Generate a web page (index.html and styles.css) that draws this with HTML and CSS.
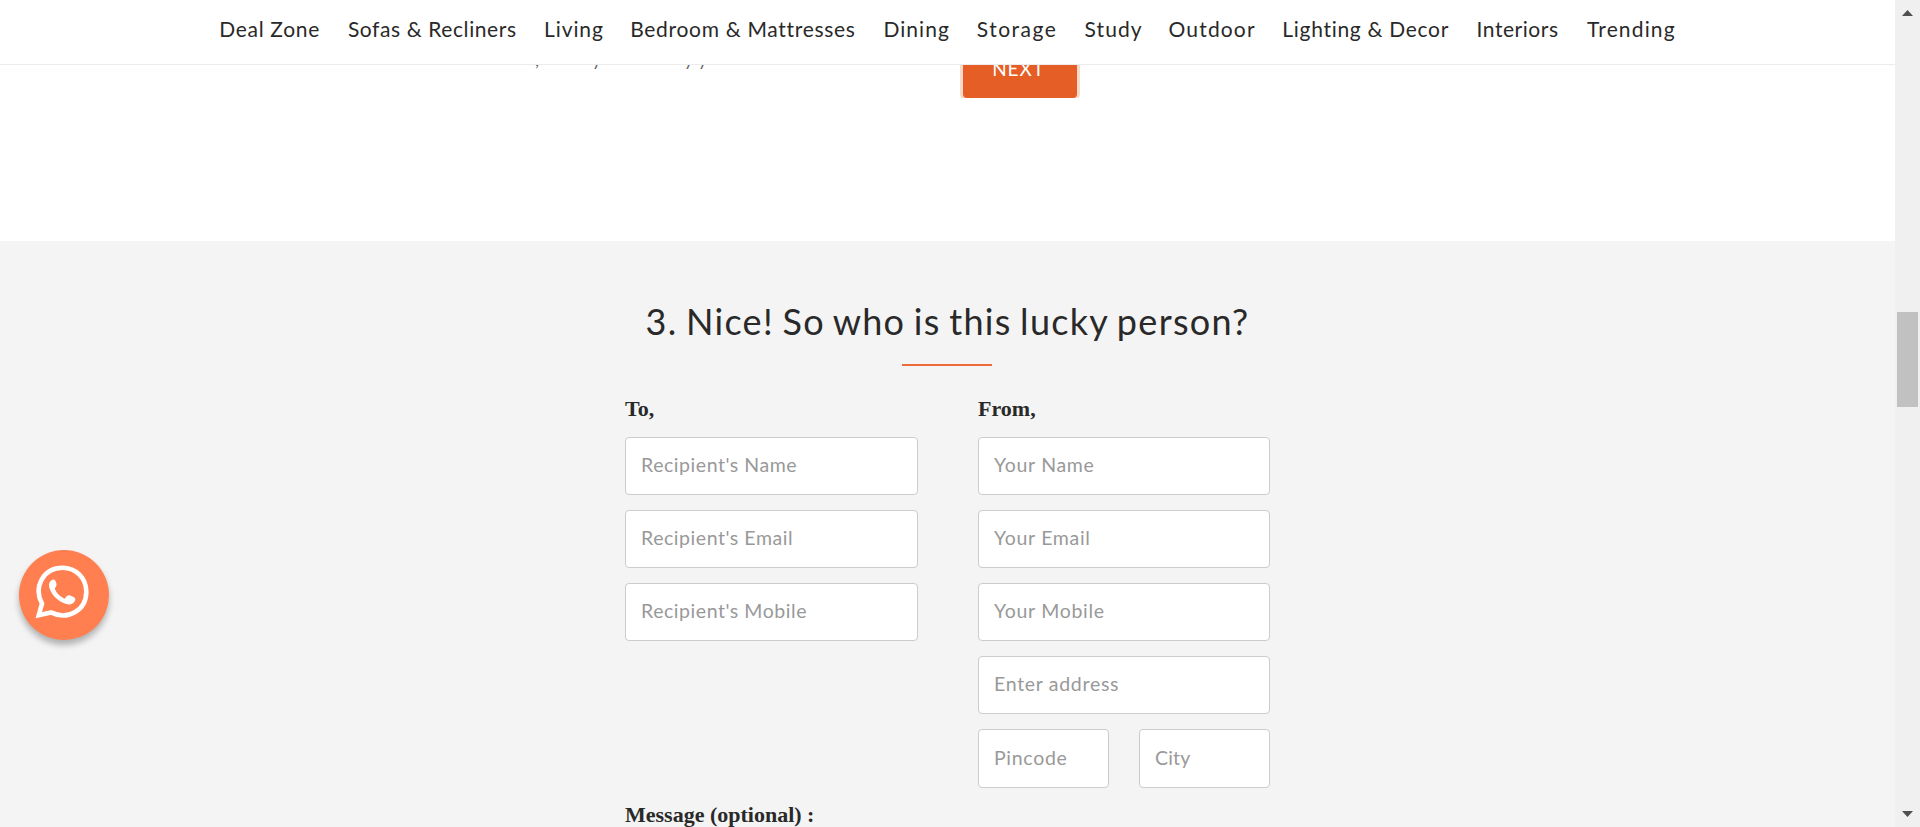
FILE: index.html
```html
<!DOCTYPE html>
<html lang="en">
<head>
<meta charset="utf-8">
<title>Gift Card</title>
<link rel="stylesheet" href="styles.css">
</head>
<body>
<div class="page">
  <header class="header">
    <nav class="nav">
      <a class="t-deal">Deal Zone</a>
      <a class="t-sofas">Sofas &amp; Recliners</a>
      <a class="t-living">Living</a>
      <a class="t-bedroom">Bedroom &amp; Mattresses</a>
      <a class="t-dining">Dining</a>
      <a class="t-storage">Storage</a>
      <a class="t-study">Study</a>
      <a class="t-outdoor">Outdoor</a>
      <a class="t-lighting">Lighting &amp; Decor</a>
      <a class="t-interiors">Interiors</a>
      <a class="t-trending">Trending</a>
    </nav>
  </header>
  <section class="step">
    <p class="hint"><span>,</span><span>y</span><span>y</span><span>y</span></p>
    <div class="next-clip"><button class="next">NEXT</button></div>
  </section>
  <section class="person">
    <h2 class="title">3. Nice! So who is this lucky person?</h2>
    <div class="rule"></div>
    <form class="form">
      <div class="col to">
        <label class="label">To,</label>
        <input class="field" placeholder="Recipient's Name">
        <input class="field" placeholder="Recipient's Email">
        <input class="field" placeholder="Recipient's Mobile">
      </div>
      <div class="col from">
        <label class="label">From,</label>
        <input class="field" placeholder="Your Name">
        <input class="field" placeholder="Your Email">
        <input class="field" placeholder="Your Mobile">
        <input class="field" placeholder="Enter address">
        <div class="pair">
          <input class="field" placeholder="Pincode">
          <input class="field city" placeholder="City">
        </div>
      </div>
      <label class="label message">Message (optional) :</label>
    </form>
  </section>
</div>
<aside class="scrollbar">
  <svg width="11" height="6" viewBox="0 0 11 6"><path d="M5.5 0 11 6H0z" fill="#505050"/></svg>
  <div class="thumb"></div>
  <svg class="down" width="11" height="6" viewBox="0 0 11 6"><path d="M0 0H11L5.5 6z" fill="#505050"/></svg>
</aside>
<a class="whatsapp">
  <svg width="90" height="90" viewBox="0 0 90 90">
    <path d="M19.8 65.2 23 53.6C14 37 24.5 17.8 43.5 17.8 57 17.8 67.3 28.2 67.3 41.7 67.3 60.5 48.5 70.8 32 62.4Z" fill="none" stroke="#fff" stroke-width="4.6" stroke-linejoin="miter"/>
    <path d="M33 30C35.2 29 36.2 30 37 32.3 38 35 37.8 35.8 35.7 38.5 37.5 43.5 41.5 46.8 45.8 48.7 48 45.7 49 44.8 51.5 45.7 55.5 47 57 48 56 50.8 54.5 54.3 50.5 55.2 46.5 53.8 38 50.8 32 44 30.2 37.2 29.5 34 30.5 31.2 33 30Z" fill="#fff"/>
  </svg>
</a>
</body>
</html>
```
FILE: styles.css
```css
* { box-sizing: border-box; }
body {
  margin: 0;
  width: 1920px;
  height: 827px;
  overflow: hidden;
  display: flex;
  background: #fff;
  color: #292929;
  font-family: Lato, sans-serif;
}
.page { width: 1895px; height: 827px; overflow: hidden; display: flex; flex-direction: column; }

.header { flex: none; height: 65px; background: #fff; border-bottom: 1px solid #ececec; position: relative; z-index: 2; }
.nav {
  display: grid;
  grid-template-columns: 128.7px 196.2px 86.1px 253.3px 93.3px 107.8px 84px 113.8px 194.2px 110.5px 100px;
  padding: 16px 0 0 219.2px;
  font-size: 21px;
  line-height: 26px;
  white-space: nowrap;
}
.t-deal { letter-spacing: .7px; }
.t-sofas { letter-spacing: .6px; }
.t-living { letter-spacing: .9px; }
.t-bedroom { letter-spacing: .7px; }
.t-dining { letter-spacing: 1.05px; }
.t-storage { letter-spacing: 1.5px; }
.t-study { letter-spacing: 1.1px; }
.t-outdoor { letter-spacing: 1.15px; }
.t-lighting { letter-spacing: .7px; }
.t-interiors { letter-spacing: .55px; }
.t-trending { letter-spacing: 1.15px; }

.step { flex: none; height: 176px; display: flex; align-items: flex-start; padding-left: 535px; }
.hint {
  flex: none;
  display: grid;
  grid-template-columns: 57px 92px 14px 20px;
  width: 425px;
  margin: -17px 0 0;
  font-size: 18px;
  line-height: 22px;
  color: #666;
}
.next-clip { margin-top: -23px; height: 56px; padding: 0 3px; overflow: hidden; }
.next {
  display: block;
  width: 114px;
  height: 56px;
  padding: 0 3px 3px 0;
  border: 0;
  border-radius: 4px;
  background: #e55e26;
  box-shadow: 0 0 0 3px #f8d9cc;
  color: #fff;
  font: 19px Lato, sans-serif;
  letter-spacing: .9px;
}

.person { flex: 1; background: #f4f4f4; display: flex; flex-direction: column; align-items: center; padding-top: 57px; }
.title { margin: 0; font-size: 36px; line-height: 46px; font-weight: 400; letter-spacing: 1.3px; word-spacing: -2px; white-space: nowrap; }
.rule { width: 90px; height: 2px; margin: 20px 1px 0 0; background: #ec6b38; }
.form { width: 645px; margin-top: 30px; display: grid; grid-template-columns: 292.5px 292px; column-gap: 60.5px; }
.col { display: flex; flex-direction: column; gap: 15px; align-self: start; }
.label { font: bold 22px/25px "Liberation Serif", serif; margin-bottom: 1px; }
.field {
  width: 100%;
  height: 58px;
  padding: 0 14px 3px 15px;
  border: 1px solid #ccc;
  border-radius: 4px;
  background: #fff;
  font: 19.5px Lato, sans-serif;
  letter-spacing: .55px;
}
.from .field { letter-spacing: .7px; }
.from .city { letter-spacing: .2px; }
.field::placeholder { color: #999; opacity: 1; }
.pair { display: grid; grid-template-columns: 131px 131px; justify-content: space-between; }
.pair .field { height: 59px; }
.message { margin-top: 14px; }

.scrollbar { width: 25px; height: 827px; padding: 10px 0; background: #f0f0f0; display: flex; flex-direction: column; align-items: center; }
.thumb { width: 21px; height: 95px; margin-top: 296px; background: #c1c1c1; }
.down { margin-top: auto; }

.whatsapp { position: fixed; left: 19px; top: 550px; width: 90px; height: 90px; border-radius: 50%; background: #ff7f50; box-shadow: 0 5px 6px rgba(0, 0, 0, .28); }
.whatsapp svg { display: block; }
```
